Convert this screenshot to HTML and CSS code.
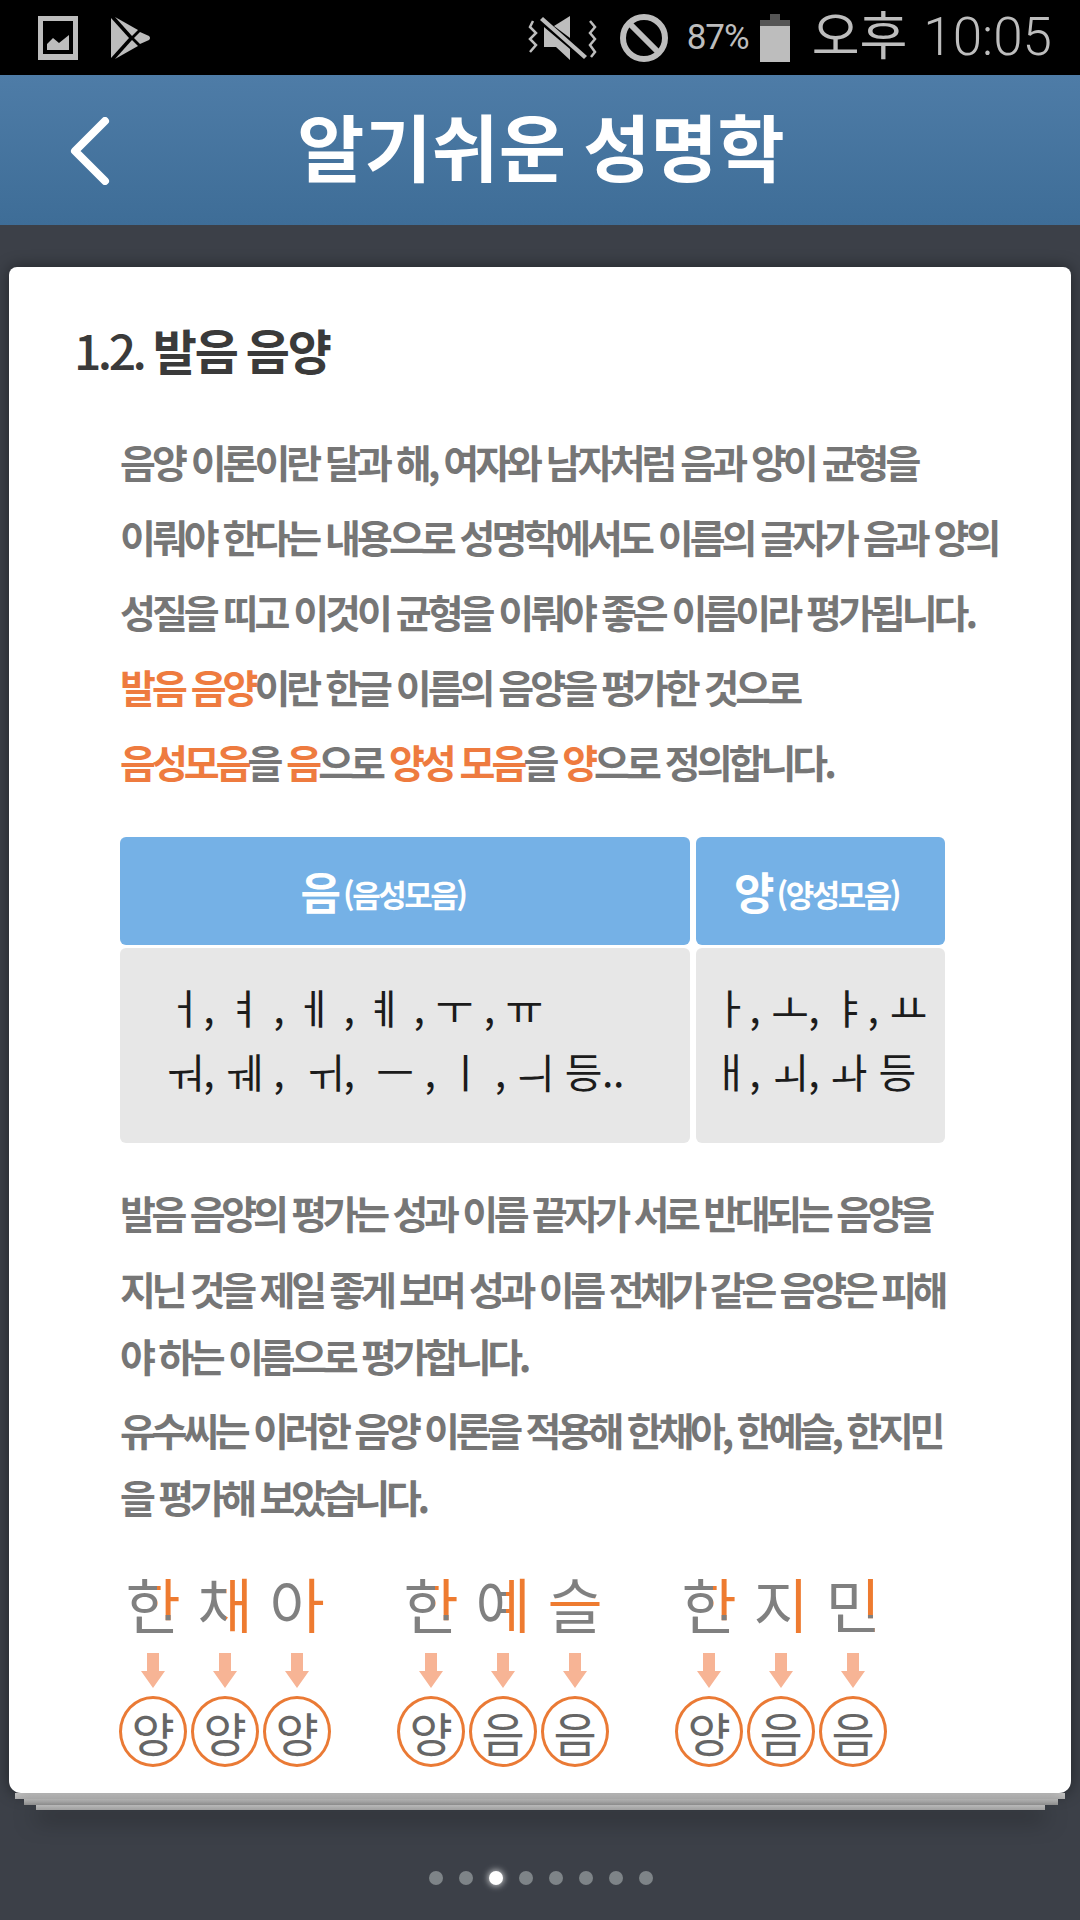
FILE: index.html
```html
<!DOCTYPE html>
<html lang="ko">
<head>
    <meta charset="UTF-8">
    <meta name="viewport" content="width=device-width, initial-scale=1.0">
    <title>알기쉬운 성명학</title>
    <link rel="stylesheet" href="styles.css">
</head>
<body>
    <div class="status-bar">
        <svg class="icon-picture" width="40" height="44" viewBox="0 0 40 44">
            <path fill-rule="evenodd" d="M0 0h40v44H0zM5 5v33h30V5z"/>
            <path d="M9 34v-6l6-6 6 5 10-8v15z"/>
        </svg>
        <svg class="icon-play" width="40" height="44" viewBox="0 0 40 44">
            <path d="M0 2v40l18-20z"/>
            <path d="M4 1l17 19 6-6z"/>
            <path d="M4 43l17-19 6 6z"/>
            <path d="M23 22l6-6 9 4q2 2 0 4l-9 4z"/>
        </svg>
        <div class="status-right">
            <svg class="icon-mute" width="70" height="46" viewBox="0 0 70 46">
                <path d="M16 12v20h12l14 13V34z"/>
                <path d="M26 11L42 1v22z"/>
                <path d="M12 5l3-3 44 39-3 3z"/>
                <path class="wave" d="M5 6l-3 6 6 6-6 6 6 6-6 7"/>
                <path class="wave" d="M62 6l5 6-5 6 5 6-5 6 5 7-4 5"/>
            </svg>
            <svg class="icon-block" width="48" height="48" viewBox="0 0 48 48">
                <circle class="ring" cx="24" cy="24" r="21"/>
                <path class="bar" d="M10 10l28 28"/>
            </svg>
            <span class="battery-text">87%</span>
            <div class="battery"><div class="battery-cap"></div><div class="battery-top"></div><div class="battery-fill"></div></div>
            <span class="clock"><span class="ampm">오후</span> 10:05</span>
        </div>
    </div>

    <header class="app-header">
        <svg class="back" width="40" height="68" viewBox="0 0 40 68">
            <path d="M35 4L5 34l30 30"/>
        </svg>
        <h1>알기쉬운 성명학</h1>
    </header>

    <main class="page">
        <section class="card">
            <h2><span class="num">1.2.</span> 발음 음양</h2>
            <p class="text">
                음양 이론이란 달과 해, 여자와 남자처럼 음과 양이 균형을<br>
                이뤄야 한다는 내용으로 성명학에서도 이름의 글자가 음과 양의<br>
                성질을 띠고 이것이 균형을 이뤄야 좋은 이름이라 평가됩니다.<br>
                <em>발음 음양</em>이란 한글 이름의 음양을 평가한 것으로<br>
                <em>음성모음</em>을 <em>음</em>으로 <em>양성 모음</em>을 <em>양</em>으로 정의합니다.
            </p>

            <div class="vowels">
                <div class="vowels-head head-yin">음<small>(음성모음)</small></div>
                <div class="vowels-head head-yang">양<small>(양성모음)</small></div>
                <div class="vowels-cell vowels-left">ㅓ, ㅕ , ㅔ , ㅖ , ㅜ , ㅠ<br>ㅝ, ㅞ ,&nbsp; ㅟ,&nbsp; ㅡ , ㅣ , ㅢ 등..</div>
                <div class="vowels-cell vowels-right">ㅏ, ㅗ, ㅑ, ㅛ<br>ㅐ, ㅚ, ㅘ 등</div>
            </div>

            <p class="text tight first">발음 음양의 평가는 성과 이름 끝자가 서로 반대되는 음양을</p>
            <p class="text tight second">지닌 것을 제일 좋게 보며 성과 이름 전체가 같은 음양은 피해<br>야 하는 이름으로 평가합니다.</p>
            <p class="text tight third">유수씨는 이러한 음양 이론을 적용해 한채아, 한예슬, 한지민<br>을 평가해 보았습니다.</p>

            <div class="names">
                <div class="name">
                    <span class="glyph han">한</span><span class="glyph chae">채</span><span class="glyph a">아</span>
                    <svg class="arrow" width="24" height="35" viewBox="0 0 24 35"><path d="M6 0h12v18h6L12 35 0 18h6z"/></svg>
                    <svg class="arrow" width="24" height="35" viewBox="0 0 24 35"><path d="M6 0h12v18h6L12 35 0 18h6z"/></svg>
                    <svg class="arrow" width="24" height="35" viewBox="0 0 24 35"><path d="M6 0h12v18h6L12 35 0 18h6z"/></svg>
                    <span class="badge">양</span><span class="badge">양</span><span class="badge">양</span>
                </div>
                <div class="name">
                    <span class="glyph han">한</span><span class="glyph ye">예</span><span class="glyph seul">슬</span>
                    <svg class="arrow" width="24" height="35" viewBox="0 0 24 35"><path d="M6 0h12v18h6L12 35 0 18h6z"/></svg>
                    <svg class="arrow" width="24" height="35" viewBox="0 0 24 35"><path d="M6 0h12v18h6L12 35 0 18h6z"/></svg>
                    <svg class="arrow" width="24" height="35" viewBox="0 0 24 35"><path d="M6 0h12v18h6L12 35 0 18h6z"/></svg>
                    <span class="badge">양</span><span class="badge">음</span><span class="badge">음</span>
                </div>
                <div class="name">
                    <span class="glyph han">한</span><span class="glyph ji">지</span><span class="glyph min">민</span>
                    <svg class="arrow" width="24" height="35" viewBox="0 0 24 35"><path d="M6 0h12v18h6L12 35 0 18h6z"/></svg>
                    <svg class="arrow" width="24" height="35" viewBox="0 0 24 35"><path d="M6 0h12v18h6L12 35 0 18h6z"/></svg>
                    <svg class="arrow" width="24" height="35" viewBox="0 0 24 35"><path d="M6 0h12v18h6L12 35 0 18h6z"/></svg>
                    <span class="badge">양</span><span class="badge">음</span><span class="badge">음</span>
                </div>
            </div>
        </section>
        <div class="sheet sheet-1"></div>
        <div class="sheet sheet-2"></div>
        <div class="sheet sheet-3"></div>

        <div class="dots">
            <span class="dot"></span>
            <span class="dot"></span>
            <span class="dot active"></span>
            <span class="dot"></span>
            <span class="dot"></span>
            <span class="dot"></span>
            <span class="dot"></span>
            <span class="dot"></span>
        </div>
    </main>
</body>
</html>
```

FILE: styles.css
```css
* {
    box-sizing: border-box;
}

html, body {
    margin: 0;
    padding: 0;
}

body {
    width: 1080px;
    height: 1920px;
    overflow: hidden;
    background-color: #3c4048;
    font-family: "Noto Sans CJK KR", "Noto Sans", sans-serif;
}

/* status bar */
.status-bar {
    display: flex;
    align-items: center;
    height: 75px;
    background: #000;
    color: #bdbdbd;
    padding-left: 38px;
}

.status-bar svg {
    fill: #bdbdbd;
    flex: none;
}

.icon-play {
    margin-left: 33px;
}

.status-right {
    display: flex;
    align-items: center;
    margin-left: auto;
    padding-right: 28px;
}

.icon-mute .wave {
    fill: none;
    stroke: #bdbdbd;
    stroke-width: 2.5;
}

.icon-block {
    margin-left: 22px;
}

.icon-block .ring,
.icon-block .bar {
    fill: none;
    stroke: #bdbdbd;
    stroke-width: 6;
}

.battery-text {
    margin-left: 19px;
    font-family: Roboto, sans-serif;
    font-size: 35px;
    font-weight: 400;
    letter-spacing: -1px;
}

.battery {
    display: flex;
    flex-direction: column;
    align-items: center;
    width: 30px;
    height: 48px;
    margin-left: 11px;
}

.battery-cap {
    width: 10px;
    height: 6px;
    background: #555;
}

.battery-top {
    width: 30px;
    height: 6px;
    background: #555;
}

.battery-fill {
    width: 30px;
    height: 36px;
    background: #bdbdbd;
}

.clock {
    margin-left: 22px;
    font-family: Roboto, "Noto Sans CJK KR", sans-serif;
    font-size: 53px;
    font-weight: 300;
    line-height: 75px;
    white-space: nowrap;
}

.ampm {
    margin-right: 3px;
    font-size: 52px;
    font-weight: 400;
}

/* header */
.app-header {
    display: flex;
    align-items: center;
    justify-content: center;
    position: relative;
    height: 150px;
    background: linear-gradient(#4e7ca7, #3e6d97);
}

.app-header h1 {
    margin: 0 0 12px 2px;
    color: #fff;
    font-size: 73px;
    font-weight: 700;
    line-height: 1;
    letter-spacing: 0;
    word-spacing: -3px;
}

.back {
    position: absolute;
    left: 70px;
    top: 42px;
    fill: none;
    stroke: #fff;
    stroke-width: 8;
    stroke-linecap: round;
    stroke-linejoin: round;
}

/* main card */
.page {
    padding-top: 42px;
}

.card {
    position: relative;
    z-index: 3;
    height: 1526px;
    margin: 0 9px;
    padding: 56px 0 0 65px;
    background: #fff;
    border-radius: 8px 8px 12px 12px;
    box-shadow: 0 0 16px rgba(0, 0, 0, 0.45);
}

.card h2 {
    margin: 0 0 49px;
    color: #3a3a3a;
    font-size: 48px;
    font-weight: 700;
    line-height: 52px;
    letter-spacing: -2.2px;
    word-spacing: -2px;
}

.card h2 .num {
    font-weight: 500;
    letter-spacing: -3.5px;
}

.text {
    margin: 0 0 0 46px;
    color: #767676;
    font-size: 39px;
    font-weight: 700;
    line-height: 75px;
    letter-spacing: -4px;
    white-space: nowrap;
}

.text em {
    color: #ee7b3f;
    font-style: normal;
}

.tight {
    line-height: 67px;
    letter-spacing: -4.3px;
}

.first {
    margin-top: 36px;
}

.second {
    margin-top: 9px;
}

.third {
    margin-top: 7px;
}

/* vowel table */
.vowels {
    display: grid;
    grid-template-columns: 570px 249px;
    grid-template-rows: 108px 195px;
    column-gap: 6px;
    row-gap: 3px;
    margin: 38px 0 0 46px;
}

.vowels-head {
    display: flex;
    align-items: center;
    justify-content: center;
    background: #75b1e6;
    border-radius: 6px;
    color: #fff;
    font-size: 44px;
    font-weight: 700;
    letter-spacing: -2px;
}

.head-yin {
    padding-right: 44px;
}

.head-yang {
    padding-right: 8px;
}

.vowels-head small {
    margin: 4px 0 0 4px;
    font-size: 31px;
    font-weight: 700;
    letter-spacing: -2.5px;
}

.vowels-cell {
    background: #e7e7e7;
    border-radius: 6px;
    color: #1c1c1c;
    font-size: 41px;
    line-height: 64px;
    letter-spacing: -0.5px;
    white-space: nowrap;
    padding-top: 26px;
}

.vowels-left {
    padding-left: 46px;
}

.vowels-right {
    padding-left: 16px;
}

/* name diagram */
.names {
    display: flex;
    gap: 62px;
    margin: 43px 0 0 43px;
}

.name {
    display: grid;
    grid-template-columns: repeat(3, 72px);
    justify-items: center;
}

.glyph {
    height: 60px;
    font-size: 60px;
    font-weight: 400;
    line-height: 60px;
    color: transparent;
    -webkit-background-clip: text;
    background-clip: text;
}

.han {
    background-image: linear-gradient(#808080, #808080), linear-gradient(90deg, #808080 58%, #ee7b30 58%);
    background-size: 100% 30%, 100% 100%;
    background-position: bottom, 0 0;
    background-repeat: no-repeat;
}

.chae {
    background-image: linear-gradient(90deg, #808080 52%, #ee7b30 52%);
}

.a {
    background-image: linear-gradient(90deg, #808080 62%, #ee7b30 62%);
}

.ye {
    background-image: linear-gradient(90deg, #808080 56%, #ee7b30 56%);
}

.seul {
    background-image: linear-gradient(#808080 42%, #ee7b30 42%, #ee7b30 55%, #808080 55%);
}

.ji {
    background-image: linear-gradient(90deg, #808080 66%, #ee7b30 66%);
}

.min {
    background-image: linear-gradient(#808080, #808080), linear-gradient(90deg, #808080 70%, #ee7b30 70%);
    background-size: 100% 30%, 100% 100%;
    background-position: bottom, 0 0;
    background-repeat: no-repeat;
}

.arrow {
    margin-top: 20px;
    fill: #f7b495;
}

.badge {
    display: flex;
    align-items: center;
    justify-content: center;
    width: 68px;
    height: 71px;
    margin-top: 8px;
    border: 3px solid #ea7a35;
    border-radius: 50%;
    color: #666;
    font-size: 47px;
    line-height: 1;
}

/* paper stack under the card */
.sheet {
    position: relative;
}

.sheet-1 {
    z-index: 2;
    height: 6px;
    margin: 0 15px 0 15px;
    background: linear-gradient(#e4e4e4, #b8b8b8);
}

.sheet-2 {
    z-index: 1;
    height: 6px;
    margin: 0 22px 0 24px;
    background: linear-gradient(#c4c4c4, #8f8f8f);
}

.sheet-3 {
    height: 5px;
    margin: 0 35px 0 36px;
    background: linear-gradient(#bdbdbd, #a0a0a0);
    box-shadow: 0 8px 22px rgba(0, 0, 0, 0.65);
}

/* pager */
.dots {
    display: flex;
    justify-content: center;
    gap: 16px;
    margin-top: 61px;
    padding-left: 2px;
}

.dot {
    width: 14px;
    height: 14px;
    border-radius: 50%;
    background: #7e8488;
}

.dot.active {
    background: #fff;
    box-shadow: 0 0 6px 1px rgba(255, 255, 255, 0.7);
}
```
